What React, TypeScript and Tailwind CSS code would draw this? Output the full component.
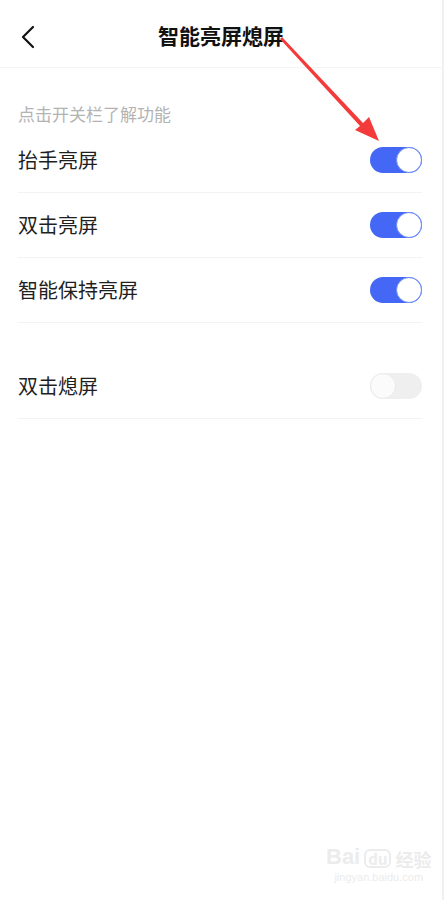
import React from "react";

type Item = { label: string; on: boolean };

const groupA: Item[] = [
  { label: "抬手亮屏", on: true },
  { label: "双击亮屏", on: true },
  { label: "智能保持亮屏", on: true },
];

const groupB: Item[] = [{ label: "双击熄屏", on: false }];

function Toggle({ on }: { on: boolean }) {
  return on ? (
    <div className="flex h-[26px] w-[52px] items-center justify-end rounded-full bg-[#4467f6]">
      <div className="h-[26px] w-[26px] rounded-full border border-[#6f8cf8] bg-white" />
    </div>
  ) : (
    <div className="flex h-[26px] w-[52px] items-center justify-start rounded-full bg-[#efefef]">
      <div className="h-[26px] w-[26px] rounded-full border border-[#ebebeb] bg-[#fbfbfb]" />
    </div>
  );
}

function Row({ item }: { item: Item }) {
  return (
    <div className="ml-[18px] mr-[20px] flex h-[65px] items-center justify-between border-b border-[#f3f3f3]">
      <span className="text-[20px] leading-none text-[#1f1f1f]">{item.label}</span>
      <Toggle on={item.on} />
    </div>
  );
}

export default function App() {
  return (
    <div
      className="relative flex h-[900px] w-[444px] overflow-hidden bg-white"
      style={{ fontFamily: '"Noto Sans CJK SC", "Noto Sans", sans-serif' }}
    >
      <div className="flex-1">
        {/* header */}
        <div className="relative flex h-[68px] items-center justify-center border-b border-[#f4f4f4]">
          <svg
            className="absolute left-[20px] top-[25px]"
            width="16"
            height="24"
            viewBox="0 0 16 24"
            fill="none"
          >
            <path d="M13 2 L3 12 L13 22" stroke="#111" strokeWidth="2.2" strokeLinecap="round" strokeLinejoin="round" />
          </svg>
          <h1 className="pt-[4px] text-[21px] font-bold text-[#111]">智能亮屏熄屏</h1>
        </div>

        <div className="px-[18px] pt-[35px] text-[17px] leading-[22px] text-[#b3b3b3]">点击开关栏了解功能</div>

        <div className="mt-[3px]">
          {groupA.map((it) => (
            <Row key={it.label} item={it} />
          ))}
        </div>

        <div className="mt-[31px]">
          {groupB.map((it) => (
            <Row key={it.label} item={it} />
          ))}
        </div>
      </div>

      {/* right edge strip */}
      <div className="w-[2px] bg-[#f0f0f0]" />

      {/* red annotation arrow */}
      <svg className="pointer-events-none absolute left-0 top-0" width="444" height="900">
        <polygon points="280,39 282,37 363,123 369,117 379,141 355,130 360,126" fill="#f33b3b" />
      </svg>

      {/* watermark */}
      <div className="pointer-events-none absolute left-[326px] top-[846px] flex flex-col items-center text-[#ececec]">
        <div className="flex items-end gap-[4px]">
          <span className="text-[22px] font-bold leading-none" style={{ fontFamily: '"Liberation Sans", sans-serif' }}>
            Bai
          </span>
          <span className="rounded-[6px] border-2 border-[#ececec] px-[2px] text-[15px] font-bold leading-none">du</span>
          <span className="text-[18px] font-bold leading-none">经验</span>
        </div>
        <span className="mt-[4px] text-[11px] leading-none" style={{ fontFamily: '"Liberation Sans", sans-serif' }}>
          jingyan.baidu.com
        </span>
      </div>
    </div>
  );
}
